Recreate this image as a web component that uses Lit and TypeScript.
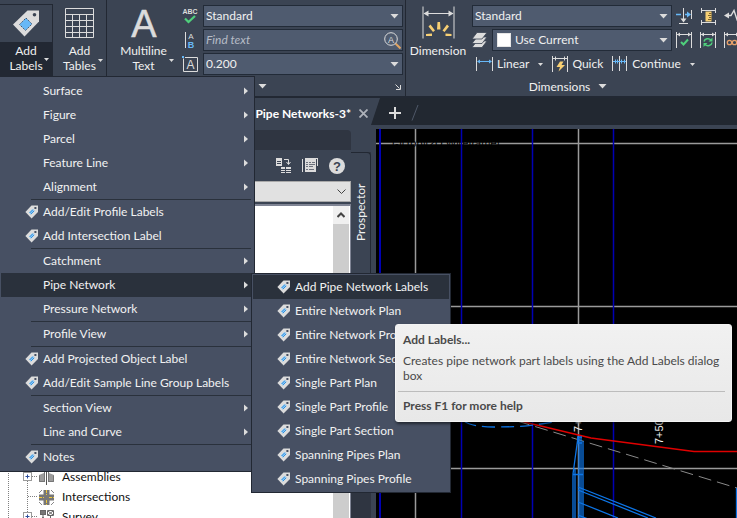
import { LitElement, html, svg, css, nothing } from "lit";
import { customElement } from "lit/decorators.js";

type Entry = { label: string; icon?: boolean; open?: boolean; sub?: boolean } | null;

const MENU: Entry[] = [
  { label: "Surface", sub: true },
  { label: "Figure", sub: true },
  { label: "Parcel", sub: true },
  { label: "Feature Line", sub: true },
  { label: "Alignment", sub: true },
  null,
  { label: "Add/Edit Profile Labels", icon: true },
  { label: "Add Intersection Label", icon: true },
  null,
  { label: "Catchment", sub: true },
  { label: "Pipe Network", sub: true, open: true },
  { label: "Pressure Network", sub: true },
  null,
  { label: "Profile View", sub: true },
  null,
  { label: "Add Projected Object Label", icon: true },
  { label: "Add/Edit Sample Line Group Labels", icon: true },
  null,
  { label: "Section View", sub: true },
  { label: "Line and Curve", sub: true },
  null,
  { label: "Notes", icon: true },
];

const SUBMENU = [
  "Add Pipe Network Labels",
  "Entire Network Plan",
  "Entire Network Profile",
  "Entire Network Section",
  "Single Part Plan",
  "Single Part Profile",
  "Single Part Section",
  "Spanning Pipes Plan",
  "Spanning Pipes Profile",
];

const shared = css`
  * { box-sizing: border-box; }
  svg { display: block; flex: none; }
  button, input, select { font: inherit; color: inherit; background: none; border: 0; margin: 0; padding: 0; }
  ul { list-style: none; margin: 0; padding: 0; }
`;

const icon = (w: number, h: number, body: unknown) =>
  html`<svg width=${w} height=${h} viewBox="0 0 ${w} ${h}" fill="none" stroke="#dcdcdc" aria-hidden="true">${body}</svg>`;

const down = () => icon(9, 5, svg`<path d="M0.5 0h8l-4 4.6z" fill="#dcdcdc" stroke="none"/>`);
const smallDown = () => icon(5, 3, svg`<path d="M0 0h5L2.5 3z" fill="#dcdcdc" stroke="none"/>`);

const tag = () => icon(14, 14, svg`
  <path d="M6.5 0.6H13V7L6.6 13.4 0.4 7z" fill="#dcdcdc" stroke="none"/>
  <rect x="9.4" y="2" width="2" height="2" fill="#475063" stroke="none"/>
  <path d="M4 7.4 7.4 4 9.4 6 6 9.4z" fill="#8fcaf8" stroke="none"/>
  <path d="M4.6 8 8 4.6M5.8 9.2 9.2 5.8" stroke="#2f8fdc" stroke-width="1"/>`);

const bigTag = () => icon(27, 27, svg`
  <path d="M14.500 0.500H26v11L11.500 26.500 0 14.500z" fill="#dcdcdc" stroke="none"/>
  <circle cx="21.500" cy="4.800" r="1.800" fill="#3b4453" stroke="none"/>
  <path d="M13 8l6 6-6.500 6.500-6-6z" fill="#67b8f7" stroke="#3f556e" stroke-dasharray="1.500 1"/>`);

const table = () => icon(29, 30, svg`
  <path d="M0.500 0.500h28v29h-28z" stroke-width="1"/>
  <path d="M0.500 6.500h28M7.500 7v22.500M14.500 7v22.500M21.500 7v22.500M1 12.500h27M1 18.500h27M1 24.500h27"/>`);

const dimension = () => icon(33, 33, svg`
  <path d="M1 0.500v32M32 0.500v32M2 7.500h29"/>
  <path d="M1.500 7.500l5-3v6zM31.500 7.500l-5-3v6z" fill="#dcdcdc" stroke="none"/>
  <g fill="#f7cf73" stroke="none">
    <path d="M15.500 16h2.500l0.500 7.500h-3.500zM6.500 20.500l2-2 4.500 6-2 1.500zM27 20.500l-2-2-4.500 6 2 1.500zM4 28l6-0.500v2.500H4zM29.500 28l-6-0.500v2.500h6z"/>
  </g>`);

const spell = () => icon(16, 16, svg`
  <text x="8" y="6" text-anchor="middle" class="glyph" font-size="7" font-weight="700" fill="#dcdcdc" stroke="none">ABC</text>
  <path d="M3 10.500l3.500 3.500 6.500-6" stroke="#4fd07c" stroke-width="2.200"/>`);

const align = () => icon(16, 16, svg`
  <path d="M3.500 0v16"/>
  <text x="9" y="6.500" text-anchor="middle" class="glyph" font-size="8" fill="#dcdcdc" stroke="none">A</text>
  <text x="9" y="15.500" text-anchor="middle" class="glyph" font-size="9" font-weight="700" fill="#67b8f7" stroke="none">B</text>`);

const height = () => icon(16, 16, svg`
  <path d="M1.500 2.500V15.500H15.500V1.500H3"/>
  <text x="8.500" y="13" text-anchor="middle" class="glyph" font-size="12" fill="#dcdcdc" stroke="none">A</text>
  <rect width="2" height="2" fill="#67b8f7" stroke="none"/>`);

const finder = () => icon(17, 17, svg`
  <path d="M11.500 11.500l5 5" stroke="#e0a464" stroke-width="2"/>
  <circle cx="7" cy="7" r="6.300"/>
  <text x="7" y="10.500" text-anchor="middle" class="glyph" font-size="9" fill="#dcdcdc" stroke="none">A</text>`);

const layers = () => icon(15, 16, svg`
  <g fill="#dcdcdc" stroke="#3b4453" stroke-width="0.800">
    <path d="M0 15.500 5 9h10l-5 6.500z"/><path d="M0 11.500 5 5h10l-5 6.500z"/><path d="M0 7 5 0.500h10L10 7z"/>
  </g>`);

const linear = () => icon(17, 16, svg`
  <path d="M0.500 1v14M16.500 1v14"/>
  <path d="M2 5.500h13" stroke="#67b8f7"/><path d="M1 5.500l3-2v4zM16 5.500l-3-2v4z" fill="#67b8f7" stroke="none"/>`);

const quick = () => icon(16, 16, svg`
  <path d="M0.500 0v16M15.500 0v16M1 2.500h14M3.500 0.500v4M12.500 0.500v4"/>
  <path d="M8 5.500h3.500L9.500 9H13l-6.500 6.500L8 11H4.500z" fill="#f7cf73" stroke="none"/>`);

const cont = () => icon(16, 16, svg`
  <path d="M0.500 0v15M7.500 0v15M14.500 0v15"/>
  <path d="M1 5.500h13M3.500 3.500v4M5.500 3.500v4M9.500 3.500v4M12.500 3.500v4" stroke="#67b8f7"/>`);

const breakDim = () => icon(17, 17, svg`
  <path d="M7.500 0v11M3 15.500h9"/><path d="M4.500 10.500h6l-3 4z" fill="#dcdcdc" stroke="none"/>
  <path d="M0 6.500h5M9 6.500h4" stroke="#67b8f7" stroke-width="1.500"/>
  <path d="M15 6.500l-4-3v6z" fill="#67b8f7" stroke="none"/><path d="M15.500 2v9"/>`);

const space = () => icon(17, 17, svg`
  <path d="M1 2.500h15M1 14.500h15M1.500 0v5M15.500 0v5M1.500 12v5M15.500 12v5" />
  <rect x="5.500" y="3.500" width="6" height="10" fill="#f7cf73" stroke="none"/>
  <path d="M9 5.500h2.500M8 7.500h3.500M9 9.500h2.500M8 11.500h3.500" stroke="#7b6430"/>`);

const jog = () => icon(17, 17, svg`
  <path d="M3 7.500h4l3-5 3 9 3-5" stroke-width="1.400"/><path d="M0 7.500l5-3v6z" fill="#dcdcdc" stroke="none"/>`);

const frame = svg`<path d="M0.500 0v16M15.500 0v16M1 2.500h14"/><path d="M1 2.500l3-2v4zM15 2.500l-3-2v4z" fill="#dcdcdc" stroke="none"/>`;
const check = () => icon(17, 17, svg`${frame}<path d="M5 10l2.500 2.500 4.500-5" stroke="#4fd07c" stroke-width="2"/>`);
const cycle = () => icon(17, 17, svg`${frame}<path d="M4 9.500a4 3.500 0 0 1 7-1.500M12 10.500a4 3.500 0 0 1-7 2" stroke="#4fd07c" stroke-width="1.500"/><path d="M12.500 5.500v4h-4zM3.500 15v-4h4z" fill="#4fd07c" stroke="none"/>`);
const chain = () => icon(17, 17, svg`${frame}<circle cx="5.500" cy="10.500" r="2.200" stroke="#e8a069" stroke-width="1.300"/><circle cx="10.500" cy="10.500" r="2.200" stroke="#e8a069" stroke-width="1.300"/>`);

@customElement("help-tip")
export class HelpTip extends LitElement {
  static styles = [shared, css`
    :host {
      display: block; width: 337px; padding: 7px 6px 8px 2px; color: #4a4a4a; white-space: normal;
      background: linear-gradient(#f1f1f1, #e8e8e8); border: 1px solid #f4f4f4; border-radius: 3px;
      box-shadow: 1px 2px 3px #00000080; line-height: 15px;
    }
    h2, p { margin: 0; padding: 0 0 0 5px; font-size: 12px; font-weight: 400; }
    h2, .more { font-weight: 700; }
    .text { padding-top: 6px; padding-bottom: 8px; }
    .more { border-top: 1px solid #bcbcbc; padding-top: 6px; }
  `];
  render() {
    return html`<h2>Add Labels...</h2>
      <p class="text">Creates pipe network part labels using the Add Labels dialog box</p>
      <p class="more">Press F1 for more help</p>`;
  }
}

@customElement("label-menu")
export class LabelMenu extends LitElement {
  static styles = [shared, css`
    :host { display: block; width: 255px; }
    .menu { background: #475063; border: 1px solid #222833; color: #f2f2f2; }
    .main { border-left: 0; padding: 2px 3px 2px 1px; }
    li { position: relative; }
    .item { display: flex; align-items: center; width: 100%; height: 24px; text-align: left; white-space: nowrap; }
    .mark { width: 42px; padding-left: 24px; flex: none; }
    .text { flex: 1; }
    .arrow { margin-right: 3px; }
    .on { background: #2a313c; }
    .rule { height: 1px; background: #2a313c; margin-left: 30px; }
    .fly { position: absolute; left: 250px; top: 0; width: 200px; padding: 1px; z-index: 1; }
    .tip { position: absolute; left: 142px; top: 49px; z-index: 2; }
  `];
  private submenu() {
    return html`<ul class="menu fly" role="menu" aria-label="Pipe Network">
      ${SUBMENU.map((label, i) => html`<li role="none">
        <button class="item ${i ? "" : "on"}" role="menuitem"><span class="mark">${tag()}</span><span class="text">${label}</span></button>
        ${i ? nothing : html`<help-tip class="tip" role="tooltip"></help-tip>`}
      </li>`)}
    </ul>`;
  }
  render() {
    return html`<ul class="menu main" role="menu" aria-label="Add Labels">
      ${MENU.map((e) => e
        ? html`<li role="none">
            <button class="item ${e.open ? "on" : ""}" role="menuitem">
              <span class="mark">${e.icon ? tag() : nothing}</span><span class="text">${e.label}</span>
              ${e.sub ? html`<span class="arrow">${icon(4, 8, svg`<path d="M0 0.500l4 3.500-4 3.500z" fill="#dcdcdc" stroke="none"/>`)}</span>` : nothing}
            </button>
            ${e.open ? this.submenu() : nothing}
          </li>`
        : html`<li class="rule" role="separator"></li>`)}
    </ul>`;
  }
}

@customElement("app-ribbon")
export class AppRibbon extends LitElement {
  static styles = [shared, css`
    :host { display: flex; height: 98px; background: #3b4453; color: #f0f0f0; border-bottom: 2px solid #222833; overflow: hidden; }
    .glyph { font-family: "Liberation Sans", sans-serif; }
    .panel { display: flex; flex-direction: column; border-right: 1px solid #222833; flex: none; }
    .text-panel { padding-right: 2px; }
    .wide { flex: 1; border-right: 0; min-width: 0; }
    .row { display: flex; }
    .title { display: flex; align-items: center; justify-content: center; gap: 8px; height: 23px; }
    .big { display: flex; flex: none; flex-direction: column; align-items: center; width: 53px; height: 73px; margin-top: 4px; line-height: 15px; position: relative; }
    .big .pic { height: 37px; display: flex; align-items: center; justify-content: center; }
    .big .cap { flex: 1; width: 100%; display: flex; align-items: flex-start; justify-content: center; padding-top: 2px; }
    .big .more { position: absolute; right: 3px; bottom: 15px; }
    .active { border: 1px solid #222833; border-left: 0; }
    .active .cap { background: #222833; padding-top: 1px; }
    .mtext { width: 73px; }
    .mtext .more { right: 6px; }
    .dim { width: 64px; }
    .grid { display: grid; align-items: center; row-gap: 2px; margin-top: 5px; }
    .text-grid { grid-template-columns: 16px 200px; grid-auto-rows: 22px; column-gap: 5px; margin-left: 2px; }
    .field { display: flex; align-items: center; height: 22px; background: #4f5b6f; border: 1px solid #222b38; padding: 0 3px 0 2px; min-width: 0; }
    .field select, .field input { flex: 1; min-width: 0; width: 0; appearance: none; outline: 0; }
    .field input::placeholder { color: #b6bcc6; font-style: italic; opacity: 1; }
    .find { padding-right: 1px; }
    .swatch { width: 14px; height: 14px; background: #fff; margin: 0 4px 0 2px; border: 1px solid #e6e6e6; }
    .dim-col { display: flex; flex: none; flex-direction: column; gap: 2px; margin: 5px 0 0 2px; }
    .combo { width: 200px; }
    .line { display: flex; align-items: center; height: 22px; }
    .line .field { flex: 1; margin-left: 5px; }
    .cmd { display: flex; align-items: center; gap: 4px; white-space: nowrap; }
    .cmds { gap: 9px; padding-left: 4px; width: 230px; }
    .cmds .more { margin-left: 5px; }
    .tools { display: grid; flex: none; grid-template-columns: repeat(3, 17px); gap: 7px; margin: 8px 0 0 -26px; align-content: start; }
    .t1 { padding-left: 151px; justify-content: space-between; padding-right: 2px; }
    .t2 { padding-right: 6px; width: 330px; }
  `];
  render() {
    return html`
      <section class="panel">
        <div class="row">
          <button class="big active"><span class="pic">${bigTag()}</span><span class="cap">Add<br>Labels</span><span class="more">${smallDown()}</span></button>
          <button class="big"><span class="pic">${table()}</span><span class="cap">Add<br>Tables</span><span class="more">${smallDown()}</span></button>
        </div>
      </section>
      <section class="panel text-panel">
        <div class="row">
          <button class="big mtext">
            <span class="pic">${icon(30, 37, svg`<text x="15" y="33" text-anchor="middle" class="glyph" font-size="38" fill="#dcdcdc" stroke="#dcdcdc" stroke-width="0.500">A</text>`)}</span>
            <span class="cap">Multiline<br>Text</span><span class="more">${smallDown()}</span>
          </button>
          <div class="grid text-grid">
            ${spell()}
            <div class="field"><select aria-label="Text style"><option>Standard</option></select>${down()}</div>
            ${align()}
            <div class="field find"><input aria-label="Find text" placeholder="Find text">${finder()}</div>
            ${height()}
            <div class="field"><input aria-label="Text height" value="0.200">${down()}</div>
          </div>
        </div>
        <div class="title t1">${down()}${icon(6, 6, svg`<path d="M0.500 0.500l4 4M1 5.500h4.500V1"/>`)}</div>
      </section>
      <section class="panel wide">
        <div class="row">
          <button class="big dim"><span class="pic">${dimension()}</span><span class="cap">Dimension</span></button>
          <div class="dim-col">
            <div class="field combo"><select aria-label="Dimension style"><option>Standard</option></select>${down()}</div>
            <div class="line combo">${layers()}<div class="field"><span class="swatch"></span><select aria-label="Dimension layer"><option>Use Current</option></select>${down()}</div></div>
            <div class="line cmds">
              <button class="cmd">${linear()}Linear<span class="more">${smallDown()}</span></button>
              <button class="cmd">${quick()}Quick</button>
              <button class="cmd">${cont()}Continue<span class="more">${smallDown()}</span></button>
            </div>
          </div>
          <div class="tools">${breakDim()}${space()}${jog()}${check()}${cycle()}${chain()}</div>
        </div>
        <div class="title t2">Dimensions ${down()}</div>
      </section>`;
  }
}

@customElement("tool-space")
export class ToolSpace extends LitElement {
  static styles = [shared, css`
    :host { display: flex; min-height: 0; width: 376px; background: #3b4453; flex: none; padding-top: 5px; }
    .body { flex: 1; display: flex; flex-direction: column; min-width: 0; }
    .head { height: 20px; background: #2f3541; border-radius: 0 4px 0 0; flex: none; }
    .tools { display: flex; justify-content: flex-end; align-items: center; gap: 11px; height: 31px; padding-right: 6px; flex: none; }
    .pick { display: flex; align-items: center; height: 21px; background: #e1e1e1; border: 1px solid #a9a9a9; padding-right: 4px; flex: none; }
    .pick select { flex: 1; appearance: none; }
    .list { flex: 1; min-height: 0; display: flex; background: #fff; margin-top: 2px; border: 1px solid #7f8494; border-width: 2px 1px 0 0; overflow: hidden; }
    .tree { flex: 1; padding-top: 261px; color: #111; }
    .tree li { display: flex; align-items: center; height: 20px; padding-left: 8px; }
    .label { margin-left: 8px; }
    .bar { width: 16px; margin-right: 1px; background: #cdcdcd; flex: none; }
    .up { display: flex; width: 16px; height: 18px; background: #f0f0f0; align-items: center; justify-content: center; }
    .side { width: 20px; margin-top: 22px; display: flex; flex-direction: column; flex: none; background: #2f3541; }
    .tab { height: 180px; writing-mode: vertical-rl; transform: rotate(180deg); background: #3b4453; color: #f0f0f0;
      border: 1px solid #222833; border-width: 0 0 1px 1px; border-radius: 0 0 0 4px; padding: 0 0 31px; line-height: 18px;
      text-align: right; flex: none; }
  `];
  private branch(plus: boolean) {
    return svg`<path d="M0.500 0v20M19.500 0v20M20 9.500h9" stroke="#808080" stroke-dasharray="1 1"/>
      ${plus ? svg`<rect x="15.500" y="5.500" width="8" height="8" fill="#fff" stroke="#9a9a9a"/><path d="M17.500 9.500h4M19.500 7.500v4" stroke="#2b4c9b"/>` : nothing}`;
  }
  render() {
    return html`
      <div class="body">
        <div class="head"></div>
        <div class="tools">
          ${icon(15, 15, svg`<g fill="#dcdcdc" stroke="none"><path d="M0 0h6v8H0zM5 9h4v6H5zM10 9h5v6h-5z"/></g><path d="M8 1.500h4.500V6M10.500 4l2 2.500 2-2.500"/><path d="M1 3.500h4M1 5.500h4M5 11.500h10M5 13.500h10" stroke="#3b4453"/>`)}
          ${icon(16, 15, svg`<path d="M0.500 1v13M15.500 1v7M3 0.500h13" /><rect x="3" y="1" width="11" height="13" fill="#dcdcdc" stroke="none"/><path d="M4 4.500h2M7 4.500h2M10 4.500h3M4 6.500h2M7 6.500h6M4 8.500h2M7 8.500h4M4 11.500h2M7 11.500h5" stroke="#3b4453" stroke-width="0.700"/>`)}
          ${icon(16, 16, svg`<circle cx="8" cy="8" r="8" fill="#dcdcdc" stroke="none"/><text x="8" y="12.500" text-anchor="middle" font-family="Liberation Sans, sans-serif" font-size="13" font-weight="700" fill="#3b4453" stroke="none">?</text>`)}
        </div>
        <div class="pick"><select aria-label="View"><option></option></select>${icon(9, 6, svg`<path d="M0.500 0.500l4 4 4-4" stroke="#444"/>`)}</div>
        <div class="list">
          <ul class="tree">
            <li>${icon(31, 20, this.branch(true))}${icon(15, 16, svg`<g stroke="none" fill="#9c9c9c"><path d="M0 6l5-2v9H0zM15 6l-5-2v9h5z"/></g><path d="M7.500 0v16" stroke="#555"/><path d="M0.500 6.500v6h5M14.500 6.500v6h-5M5.500 1v12M9.500 1v12" stroke="#777"/>`)}<span class="label">Assemblies</span></li>
            <li>${icon(31, 20, this.branch(false))}${icon(15, 15, svg`<path d="M7.500 0v15M0 7.500h15" stroke="#777" stroke-width="6"/><path d="M7.500 0v5M7.500 10v5M0 7.500h5M10 7.500h5" stroke="#f0c93a" stroke-dasharray="3 1"/><path d="M0 3l3-3M12 0l3 3M0 12l3 3M12 15l3-3" stroke="#888"/>`)}<span class="label">Intersections</span></li>
            <li>${icon(31, 20, this.branch(true))}${icon(15, 16, svg`<rect x="1.500" y="1.500" width="5" height="4" fill="#777" stroke="#666"/><path d="M4 6v4M1 15l3-7 3 7M8.500 1.500h6v5h-6zM9 2l5 4M14 2l-5 4M11.500 7v8" stroke="#666"/>`)}<span class="label">Survey</span></li>
          </ul>
          <div class="bar"><div class="up">${icon(8, 6, svg`<path d="M0.500 5l3.500-3.500L7.500 5" stroke="#444" stroke-width="2"/>`)}</div></div>
        </div>
      </div>
      <div class="side"><button class="tab">Prospector</button></div>`;
  }
}

@customElement("drawing-view")
export class DrawingView extends LitElement {
  static styles = [shared, css`
    :host { display: block; flex: 1; min-width: 0; margin-top: 4px; background: #000; overflow: hidden; }
    svg { width: 100%; height: 100%; }
    .blue { stroke: #0000b4; stroke-width: 1.500; }
    .gray { stroke: #9a9a9a; stroke-width: 1.500; }
    .pipe { stroke: #0d75e6; stroke-width: 1.300; }
    text { font-family: "Liberation Sans", sans-serif; font-size: 11px; fill: #f0f0f0; }
    .mask { fill: #000; }
  `];
  render() {
    return html`<svg fill="none" aria-hidden="true">
      <g class="gray"><path d="M39.500 0v2000M202.500 0v2000M0 14.500h3000M0 177.500h3000M0 339.500h3000"/></g>
      <text class="mask" x="16" y="18">[-][Top][2D Wireframe]</text>
      <g class="blue"><path d="M4 0v2000" stroke-width="2"/><path d="M85.500 0v2000M156.500 0v2000M237.500 0v2000"/></g>
      <path d="M144 292l71 17 103 13.500h3000" stroke="#e00000" stroke-width="1.300"/>
      <path d="M141 292l220 67" stroke="#8a8a8a" stroke-dasharray="13 6"/>
      <path d="M88 292q8 6 30 6 25 0 40-2l26-4" class="pipe" stroke-dasharray="13 6"/>
      <text transform="translate(206 303) rotate(-90)">7+</text>
      <text transform="translate(287 315) rotate(-90)">7+50</text>
      <g class="pipe">
        <path d="M202 308l-5 37v2000M205 308v2000M199 340v2000M203 308v2000M207 312v2000M197 345.500h10M201 308h5M201 314h5"/>
        <path d="M202 358l78 31M202 361l70 28M202 373l40 16M202 386l10 4M360.500 359v2000"/>
      </g>
    </svg>`;
  }
}

@customElement("app-root")
export class AppRoot extends LitElement {
  static styles = [shared, css`
    :host { display: flex; flex-direction: column; height: 100vh; position: relative; overflow: hidden; background: #3b4453;
      font: 12px/16px Lato, "Open Sans", sans-serif; }
    app-ribbon { flex: none; }
    .tabs { display: flex; height: 27px; background: #222831; flex: none; }
    .doc { display: flex; align-items: center; justify-content: flex-end; gap: 8px; width: 380px; padding: 4px 12px 0 0; background: #3b4453;
      color: #fff; font-weight: 700; clip-path: polygon(0 0, 100% 0, 371px 100%, 0 100%); }
    .new { display: flex; align-items: center; gap: 10px; padding: 3px 0 0 9px; }
    .close, .add { display: block; }
    .work { display: flex; flex: 1; min-height: 0; }
    tool-space { padding-right: 5px; }
    .drop { position: absolute; left: 0; top: 76px; z-index: 5; }
  `];
  render() {
    return html`
      <app-ribbon></app-ribbon>
      <div class="tabs">
        <div class="doc">Pipe Networks-3*<button class="close" aria-label="Close">${icon(9, 9, svg`<path d="M0.500 0.500l8 8M8.500 0.500l-8 8" stroke="#aeb2ba" stroke-width="1.800"/>`)}</button></div>
        <div class="new"><button class="add" aria-label="New drawing">${icon(12, 12, svg`<path d="M0 6h12M6 0v12" stroke-width="2"/>`)}</button>${icon(8, 16, svg`<path d="M7 0L1 15.500" stroke="#4f5868"/>`)}</div>
      </div>
      <div class="work">
        <tool-space></tool-space>
        <drawing-view></drawing-view>
      </div>
      <label-menu class="drop"></label-menu>`;
  }
}
